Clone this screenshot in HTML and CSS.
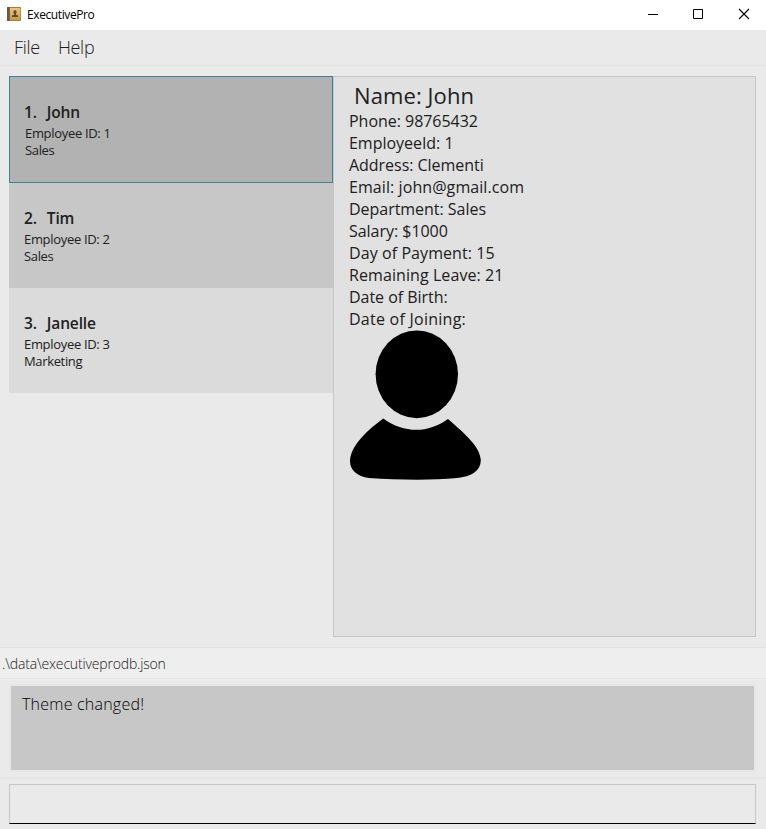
FILE: index.html
```html
<!DOCTYPE html>
<html lang="en">
<head>
<meta charset="utf-8">
<title>ExecutivePro</title>
<link rel="stylesheet" href="styles.css">
</head>
<body>
<header class="titlebar">
  <svg class="app-icon" width="14" height="14" viewBox="0 0 14 14">
    <defs><linearGradient id="cover" x1="0" y1="0" x2="0" y2="1"><stop offset="0" stop-color="#e8c681"/><stop offset="1" stop-color="#cb9645"/></linearGradient></defs>
    <rect width="14" height="14" rx="1" fill="#a87b3e"/>
    <rect x="3" y="1" width="10.3" height="12" fill="url(#cover)"/>
    <rect width="2.6" height="14" rx=".6" fill="#65584f"/>
    <path d="M8 3.2c1.2 0 1.7.9 1.6 1.9-.1.8-.5 1.3-.8 1.7v1l2.3.8V10H5V8.600l2.200-.8v-1c-.4-.4-.7-.9-.8-1.700-.1-1 .4-1.900 1.600-1.900z" fill="#554732"/>
  </svg>
  <span class="app-name">ExecutivePro</span>
  <svg class="window-buttons" width="103" height="12" viewBox="0 0 103 12" fill="none" stroke="#000">
    <path d="M0 6.500h10M45.500 1.500h9v9h-9z"/>
    <path d="M91 1l10 10M101 1L91 11" stroke-width="1.1"/>
  </svg>
</header>
<nav class="menubar"><span class="menu-file">File</span><span class="menu-help">Help</span></nav>
<main class="content">
  <section class="employees">
    <article class="employee selected"><h2><span>1.</span>John</h2><p>Employee ID: 1</p><p class="dept">Sales</p></article>
    <article class="employee even"><h2><span>2.</span>Tim</h2><p>Employee ID: 2</p><p class="dept">Sales</p></article>
    <article class="employee odd"><h2><span>3.</span>Janelle</h2><p>Employee ID: 3</p><p class="dept">Marketing</p></article>
  </section>
  <section class="details">
    <h1>Name: John</h1>
    <p>Phone: 98765432</p>
    <p>EmployeeId: 1</p>
    <p>Address: Clementi</p>
    <p class="wide">Email: john@gmail.com</p>
    <p>Department: Sales</p>
    <p>Salary: $1000</p>
    <p class="wide">Day of Payment: 15</p>
    <p class="wide">Remaining Leave: 21</p>
    <p>Date of Birth:</p>
    <p class="widest">Date of Joining:</p>
    <svg class="avatar" width="134" height="150" viewBox="0 0 134 150">
      <ellipse cx="67.800" cy="44.300" rx="41.200" ry="43.900"/>
      <path d="M34.300 88.500C55 103.500 79 103.500 99 89C111 100 131 115 131.800 130C132 141 122 147 108 148C82 150.500 50 150 20 148C8 146.500 1 140 1 131C1.500 115 20 99 34.300 88.500z"/>
    </svg>
  </section>
</main>
<div class="statusbar"><span>.\data\executiveprodb.json</span></div>
<section class="result-area"><div class="result"><span>Theme changed!</span></div></section>
<footer class="command-area"><div class="command"></div></footer>
</body>
</html>
```
FILE: styles.css
```css
* { box-sizing: border-box; }
body { margin: 0; width: 766px; height: 829px; overflow: hidden; background: #eaeaea; color: #202020; font-family: "Open Sans", "Noto Sans", sans-serif; }
h1, h2, p { margin: 0; font-weight: 400; white-space: nowrap; }
.titlebar { height: 30px; padding: 0 15px 2px 7px; display: flex; align-items: center; background: #fff; color: #000; }
.app-name { margin-left: 6px; font-size: 12px; letter-spacing: -.4px; }
.window-buttons { margin-left: auto; }
.menubar { height: 36px; padding: 5px 14px 0; display: flex; gap: 18px; border-bottom: 1px solid #e3e3e3; font-size: 18px; font-weight: 300; line-height: 25px; letter-spacing: -.3px; }
.content { height: 581px; padding: 10px 10px 10px 9px; display: flex; }
.employees { width: 324px; }
.employee { height: 105px; padding: 25px 15px; font-size: 13px; line-height: 17px; letter-spacing: -.32px; }
.employee h2 { font-size: 15.5px; font-weight: 600; line-height: 20px; margin-bottom: 3px; letter-spacing: -.15px; }
.employee h2 span { margin-right: 10px; }
.employee .dept { letter-spacing: -.35px; }
.employee.selected { height: 107px; border: 1px solid #3c8299; background: #b2b2b2; }
.employee.selected h2 { text-indent: -1px; }
.employee.even { background: #c7c7c7; }
.employee.odd { background: #dbdbdb; }
.details { width: 423px; padding: 4px 15px; border: 1px solid #c6c6c6; background: #e1e1e1; font-size: 16px; line-height: 22px; letter-spacing: -.03px; }
.details h1 { padding-left: 5px; font-size: 22px; line-height: 29px; letter-spacing: .1px; }
.details .wide { letter-spacing: .08px; }
.details .widest { letter-spacing: .25px; }
.avatar { display: block; }
.statusbar { height: 32px; padding-left: 2px; border-top: 1px solid #e3e3e3; border-bottom: 1px solid #e5e5e5; background: #eee; font-size: 14px; font-weight: 300; line-height: 32px; letter-spacing: -.17px; }
.result-area { height: 100px; padding: 5px 10px 0 9px; border-bottom: 2px solid #e5e5e5; }
.result { height: 88px; padding: 6px 11px; border: 2px solid #e6e6e6; background: #c7c7c7; color: #000; font-size: 16px; font-weight: 300; line-height: 24px; letter-spacing: .22px; }
.command-area { padding: 5px 10px 0 9px; }
.command { height: 40px; border: 1px solid #c6c6c6; border-bottom-color: #000; }
```
